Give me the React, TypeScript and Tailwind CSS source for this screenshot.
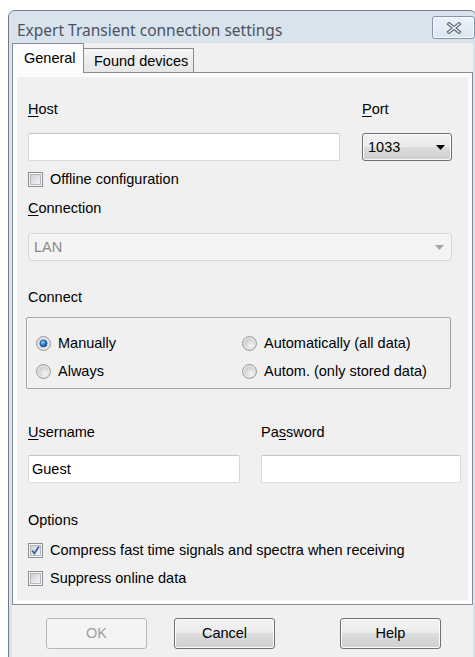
import type { ReactNode } from "react";

// Win7-style dialog controls

function Mn({ children }: { children: ReactNode }) {
  return <span className="underline decoration-1 underline-offset-[2px]">{children}</span>;
}

function CheckBox({ checked }: { checked?: boolean }) {
  return (
    <svg width="15" height="15" viewBox="0 0 15 15" className="shrink-0">
      <defs>
        <linearGradient id="cbFill" x1="0" y1="0" x2="1" y2="1">
          <stop offset="0" stopColor="#cbcfd4" />
          <stop offset="1" stopColor="#f6f6f6" />
        </linearGradient>
      </defs>
      <rect x="0.5" y="0.5" width="14" height="14" fill="#f5f5f5" stroke="#8e8f8f" />
      <rect x="2.5" y="2.5" width="10" height="10" fill="url(#cbFill)" stroke="#b4b7bc" />
      {checked && (
        <path d="M4.2 7.6 L6.4 10.4 L10.9 3.6" fill="none" stroke="#4863ad" strokeWidth="1.9" />
      )}
    </svg>
  );
}

function Radio({ checked }: { checked?: boolean }) {
  return (
    <svg width="15" height="15" viewBox="0 0 15 15" className="shrink-0">
      <defs>
        <radialGradient id="rdFill" cx="0.65" cy="0.7" r="0.75">
          <stop offset="0" stopColor="#f7f7f7" />
          <stop offset="1" stopColor="#c6c8cb" />
        </radialGradient>
        <radialGradient id="rdDot" cx="0.4" cy="0.35" r="0.75">
          <stop offset="0" stopColor="#9ad6ff" />
          <stop offset="0.45" stopColor="#2d82d2" />
          <stop offset="1" stopColor="#0c3d78" />
        </radialGradient>
      </defs>
      <circle cx="7.5" cy="7.5" r="6.9" fill="#eeeeee" stroke="#8e8f8f" strokeWidth="1" />
      <circle cx="7.5" cy="7.5" r="5.2" fill="url(#rdFill)" />
      {checked && <circle cx="7.5" cy="7.5" r="3.6" fill="url(#rdDot)" stroke="#1b4c82" strokeWidth="0.6" />}
    </svg>
  );
}

function Arrow({ color }: { color: string }) {
  return (
    <svg width="9" height="5" viewBox="0 0 9 5" className="shrink-0">
      <path d="M0 0 H9 L4.5 5 Z" fill={color} />
    </svg>
  );
}

function Row({ children, className = "" }: { children: ReactNode; className?: string }) {
  return <div className={"flex h-[17px] items-center gap-[7px] " + className}>{children}</div>;
}

const textBox =
  "h-[28px] rounded-[2px] border border-[#dadada] border-t-[#c4c4c4] bg-white flex items-center";

const button =
  "flex h-[31px] w-[101px] items-center justify-center rounded-[3px] border";

export default function App() {
  return (
    <div className="h-[657px] w-[475px] overflow-hidden bg-white pl-[8px] pt-[10px] font-['Liberation_Sans',Arial,sans-serif] text-[14.5px] leading-[17px] text-black">
      <div className="w-[469px] rounded-t-[7px] border border-[#6f7b88] bg-[#d9e3ee]">
        {/* caption */}
        <div className="flex h-[32px] items-start">
          <div className="pl-[8px] pt-[10px] font-['Noto_Sans',sans-serif] text-[15.5px] leading-[19px] text-[#4a5360]">
            Expert Transient connection settings
          </div>
          <div className="ml-auto mr-[1px] mt-[5px] flex h-[23px] w-[43px] items-center justify-center rounded-[3px] border border-[#8596ab] bg-[linear-gradient(#eef3f9,#dbe5f0)] shadow-[inset_0_0_0_1px_#f7fafd]">
            <svg width="16" height="12" viewBox="0 0 16 12">
              <path d="M3 2 L13 10 M13 2 L3 10" stroke="#5d6877" strokeWidth="3.6" strokeLinecap="square" />
              <path d="M3 2 L13 10 M13 2 L3 10" stroke="#eef2f7" strokeWidth="1.4" strokeLinecap="square" />
            </svg>
          </div>
        </div>

        <div className="mx-[3px] bg-[#f0f0f0] pb-[20px]">
          {/* tabs */}
          <div className="flex h-[29px] items-end">
            <div className="relative z-10 -mb-px flex h-[30px] w-[72px] items-center border-x border-t border-[#898c95] bg-[#fcfcfc] pl-[11px]">
              General
            </div>
            <div className="flex h-[24px] w-[110px] items-center border-r border-t border-[#898c95] bg-[linear-gradient(#f5f5f5,#e6e6e6)] pl-[10px] pt-[2px]">
              Found devices
            </div>
          </div>

          <div className="h-[533px] border border-[#898c95] bg-[#fcfcfc] p-[4px]">
            <div className="h-[523px] bg-[#f0f0f0] pl-[11px] pt-[24px]">
              <div className="flex">
                <div className="w-[312px]">
                  <Mn>H</Mn>ost
                </div>
                <div className="ml-[22px]">
                  <Mn>P</Mn>ort
                </div>
              </div>
              <div className="mt-[15px] flex">
                <div className={textBox + " w-[312px]"} />
                <div className="ml-[22px] flex h-[28px] w-[90px] items-center justify-between rounded-[3px] border border-[#707070] bg-[linear-gradient(#f2f2f2,#ebebeb_50%,#dddddd_50%,#cfcfcf)] pl-[5px] pr-[6px] shadow-[inset_0_0_0_1px_#fbfbfb]">
                  <span>1033</span>
                  <Arrow color="#000" />
                </div>
              </div>
              <Row className="mt-[10px]">
                <CheckBox />
                <span>Offline configuration</span>
              </Row>

              <div className="mt-[12px]">
                <Mn>C</Mn>onnection
              </div>
              <div className="mt-[16px] flex h-[28px] w-[424px] items-center justify-between rounded-[3px] border border-[#d6d6d6] bg-[#f4f4f4] pl-[5px] pr-[7px] text-[#8a8a8a]">
                <span>LAN</span>
                <Arrow color="#a6a6a6" />
              </div>

              <div className="mt-[28px]">Connect</div>
              <div className="-ml-[2px] mt-[11px] grid h-[72px] w-[425px] grid-cols-[206px_1fr] content-start gap-y-[11px] rounded-[2px] border border-[#a3a3a3] pl-[9px] pt-[17px] shadow-[inset_1px_1px_0_#fafafa]">
                <Row>
                  <Radio checked />
                  <span>Manually</span>
                </Row>
                <Row>
                  <Radio />
                  <span>Automatically (all data)</span>
                </Row>
                <Row>
                  <Radio />
                  <span>Always</span>
                </Row>
                <Row>
                  <Radio />
                  <span>Autom. (only stored data)</span>
                </Row>
              </div>

              <div className="mt-[35px] flex">
                <div className="w-[212px]">
                  <Mn>U</Mn>sername
                </div>
                <div className="ml-[21px]">
                  Pa<Mn>s</Mn>sword
                </div>
              </div>
              <div className="mt-[14px] flex">
                <div className={textBox + " w-[212px] pl-[3px]"}>Guest</div>
                <div className={textBox + " ml-[21px] w-[200px]"} />
              </div>

              <div className="mt-[29px]">Options</div>
              <Row className="mt-[13px]">
                <CheckBox checked />
                <span>Compress fast time signals and spectra when receiving</span>
              </Row>
              <Row className="mt-[11px]">
                <CheckBox />
                <span>Suppress online data</span>
              </Row>
            </div>
          </div>

          {/* dialog buttons */}
          <div className="mt-[13px] flex">
            <div className={button + " ml-[34px] border-[#b5b8bb] bg-[#f4f4f4] text-[#a0a0a0]"}>OK</div>
            <div className={button + " ml-[27px] border-[#707070] bg-[linear-gradient(#f2f2f2,#ebebeb_50%,#dddddd_50%,#cfcfcf)] shadow-[inset_0_0_0_1px_#fbfbfb]"}>
              Cancel
            </div>
            <div className={button + " ml-[65px] border-[#707070] bg-[linear-gradient(#f2f2f2,#ebebeb_50%,#dddddd_50%,#cfcfcf)] shadow-[inset_0_0_0_1px_#fbfbfb]"}>
              Help
            </div>
          </div>
        </div>
      </div>
    </div>
  );
}
